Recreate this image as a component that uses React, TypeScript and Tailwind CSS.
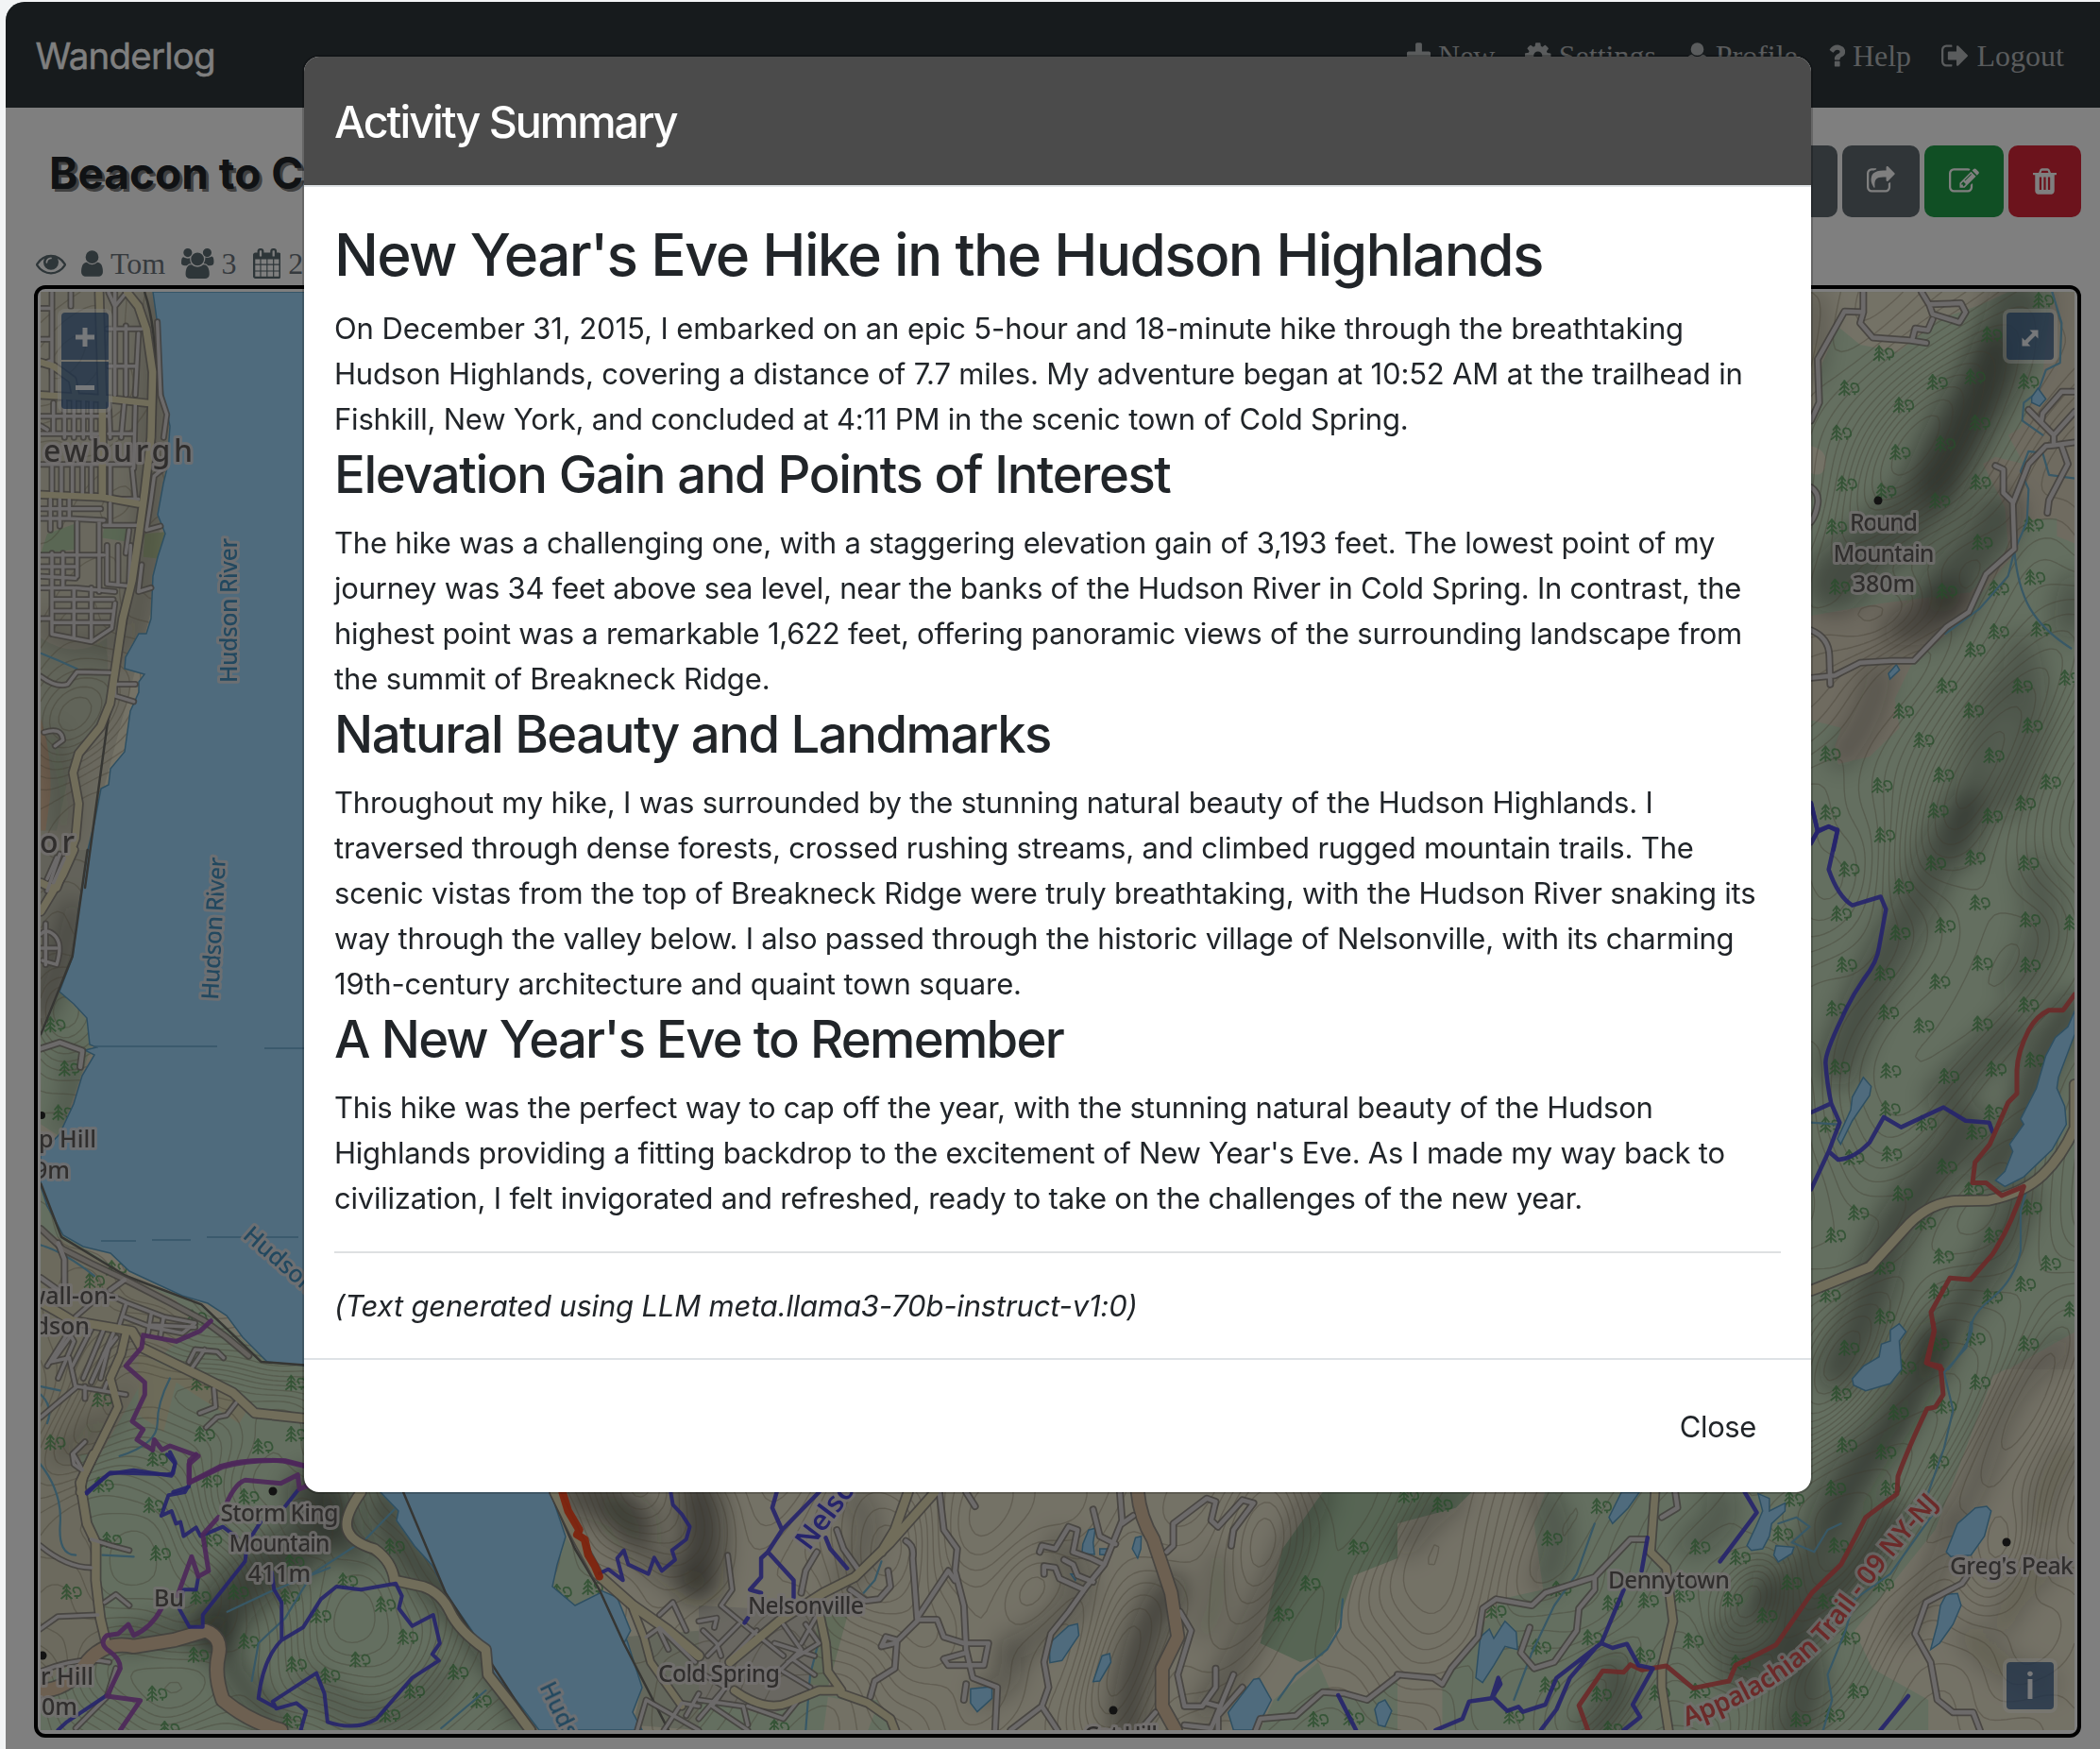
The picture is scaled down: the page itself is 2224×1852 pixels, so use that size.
import React from "react";

/* ---------- icons ---------- */

const ICONS = {
  plus: { box: "192 0 1408 1792", w: 25, d: "M1600 736v192q0 40-28 68t-68 28h-416v416q0 40-28 68t-68 28h-192q-40 0-68-28t-28-68v-416h-416q-40 0-68-28t-28-68v-192q0-40 28-68t68-28h416v-416q0-40 28-68t68-28h192q40 0 68 28t28 68v416h416q40 0 68 28t28 68z" },
  cog: { box: "128 0 1536 1792", w: 27.5, d: "M1152 896q0-106-75-181t-181-75-181 75-75 181 75 181 181 75 181-75 75-181zm512-109v222q0 12-8 23t-20 13l-185 28q-19 54-39 91 35 50 107 138 10 12 10 25t-9 23q-27 37-99 108t-94 71q-12 0-26-9l-138-108q-44 23-91 38-16 136-29 186-7 28-36 28h-222q-14 0-24.5-8.5t-11.5-21.5l-28-184q-49-16-90-37l-141 107q-10 9-25 9-14 0-25-11-126-114-165-168-7-10-7-23 0-12 8-23 15-21 51-66.5t54-70.5q-27-50-41-99l-183-27q-13-2-21-12.5t-8-23.5v-222q0-12 8-23t19-13l186-28q14-46 39-92-40-57-107-138-10-12-10-24 0-10 9-23 26-36 98.5-107.5t94.5-71.5q13 0 26 10l138 107q44-23 91-38 16-136 29-186 7-28 36-28h222q14 0 24.5 8.5t11.5 21.5l28 184q49 16 90 37l142-107q9-9 24-9 13 0 25 10 129 119 165 170 7 8 7 22 0 12-8 23-15 21-51 66.5t-54 70.5q26 50 41 98l183 28q13 2 21 12.5t8 23.5z" },
  user: { box: "256 0 1280 1792", w: 23, d: "M1536 1399q0 109-62.5 187t-150.5 78h-854q-88 0-150.5-78t-62.5-187q0-85 8.5-160.5t31.5-152 58.5-131 94-89 134.5-34.5q131 128 313 128t313-128q76 0 134.5 34.5t94 89 58.5 131 31.5 152 8.5 160.5zm-256-887q0 159-112.5 271.5t-271.5 112.5-271.5-112.5-112.5-271.5 112.5-271.5 271.5-112.5 271.5 112.5 112.5 271.5z" },
  question: { box: "384 0 1024 1792", w: 18.3, d: "M1088 1256v240q0 16-12 28t-28 12h-240q-16 0-28-12t-12-28v-240q0-16 12-28t28-12h240q16 0 28 12t12 28zm316-600q0 54-15.5 101t-35 76.5-55 59.5-57.5 43.5-61 35.5q-41 23-68.5 65t-27.5 67q0 17-12 32.5t-28 15.5h-240q-15 0-25.5-18.5t-10.5-37.5v-45q0-83 65-156.5t143-108.5q59-27 84-56t25-76q0-42-46.5-74t-107.5-32q-65 0-108 29-35 25-107 115-13 16-31 16-12 0-25-8l-164-125q-13-10-15.5-25t5.5-28q160-266 464-266 80 0 161 31t146 83 106 127.5 41 158.5z" },
  signout: { box: "64 0 1664 1792", w: 29.7, d: "M704 1440q0 4 1 20t.5 26.5-3 23.5-10 19.5-20.5 6.5h-320q-119 0-203.5-84.5t-84.5-203.5v-704q0-119 84.5-203.5t203.5-84.5h320q13 0 22.5 9.5t9.5 22.5q0 4 1 20t.5 26.5-3 23.5-10 19.5-20.5 6.5h-320q-66 0-113 47t-47 113v704q0 66 47 113t113 47h312l11.5 1 11.5 3 8 5.5 7 9 2 13.5zm928-544q0 26-19 45l-544 544q-19 19-45 19t-45-19-19-45v-288h-448q-26 0-45-19t-19-45v-384q0-26 19-45t45-19h448v-288q0-26 19-45t45-19 45 19l544 544q19 19 19 45z" },
  eye: { box: "0 0 1792 1792", w: 32, d: "M1664 960q-152-236-381-353 61 104 61 225 0 185-131.5 316.5t-316.5 131.5-316.5-131.5-131.5-316.5q0-121 61-225-229 117-381 353 133 205 333.5 326.5t434.5 121.5 434.5-121.5 333.5-326.5zm-720-384q0-20-14-34t-34-14q-125 0-214.5 89.5t-89.5 214.5q0 20 14 34t34 14 34-14 14-34q0-86 61-147t147-61q20 0 34-14t14-34zm848 384q0 34-20 69-140 230-376.5 368.5t-499.5 138.5-499.5-139-376.5-368q-20-35-20-69t20-69q140-229 376.5-368t499.5-139 499.5 139 376.5 368q20 35 20 69z" },
  users: { box: "64 0 1920 1792", w: 34.3, d: "M657 896q-162 5-265 128h-134q-82 0-138-40.5t-56-118.5q0-353 124-353 6 0 43.5 21t97.5 42.5 119 21.5q67 0 133-23-5 37-5 66 0 159 93 293zm1071 637q0 120-73 189.5t-194 69.5h-874q-121 0-194-69.5t-73-189.5q0-53 3.5-103.5t14-109 26.5-108.5 43-97.5 62-81 85.5-53.5 111.5-20q10 0 43 21.5t73 48 107 48 135 21.5 135-21.5 107-48 73-48 43-21.5q61 0 111.5 20t85.5 53.5 62 81 43 97.5 26.5 108.5 14 109 3.5 103.5zm-1024-1277q0 106-75 181t-181 75-181-75-75-181 75-181 181-75 181 75 75 181zm704 384q0 159-112.5 271.5t-271.5 112.5-271.5-112.5-112.5-271.5 112.5-271.5 271.5-112.5 271.5 112.5 112.5 271.5zm576 225q0 78-56 118.5t-138 40.5h-134q-103-123-265-128 93-134 93-293 0-29-5-66 66 23 133 23 59 0 119-21.5t97.5-42.5 43.5-21q124 0 124 353zm-128-609q0 106-75 181t-181 75-181-75-75-181 75-181 181-75 181 75 75 181z" },
  calendar: { box: "64 0 1664 1792", w: 29.7, d: "M192 1664h288v-288h-288v288zm352 0h320v-288h-320v288zm-352-352h288v-320h-288v320zm352 0h320v-320h-320v320zm-352-384h288v-288h-288v288zm736 736h320v-288h-320v288zm-384-736h320v-288h-320v288zm768 736h288v-288h-288v288zm-384-352h320v-320h-320v320zm-352-864v-288q0-13-9.5-22.5t-22.5-9.5h-64q-13 0-22.5 9.5t-9.5 22.5v288q0 13 9.5 22.5t22.5 9.5h64q13 0 22.5-9.5t9.5-22.5zm736 864h288v-320h-288v320zm-384-384h320v-288h-320v288zm384 0h288v-288h-288v288zm32-480v-288q0-13-9.5-22.5t-22.5-9.5h-64q-13 0-22.5 9.5t-9.5 22.5v288q0 13 9.5 22.5t22.5 9.5h64q13 0 22.5-9.5t9.5-22.5zm384-64v1280q0 52-38 90t-90 38h-1408q-52 0-90-38t-38-90v-1280q0-52 38-90t90-38h128v-96q0-66 47-113t113-47h64q66 0 113 47t47 113v96h384v-96q0-66 47-113t113-47h64q66 0 113 47t47 113v96h128q52 0 90 38t38 90z" },
  share: { box: "64 0 1664 1792", w: 29.7, d: "M1472 989v259q0 119-84.5 203.5t-203.5 84.5h-832q-119 0-203.5-84.5t-84.5-203.5v-832q0-119 84.5-203.5t203.5-84.5h255q13 0 22.5 9.5t9.5 22.5q0 27-26 32-77 26-133 60-10 4-16 4h-112q-66 0-113 47t-47 113v832q0 66 47 113t113 47h832q66 0 113-47t47-113v-214q0-19 18-29 28-13 54-37 16-16 35-8 21 9 21 29zm237-496l-384 384q-18 19-45 19-12 0-25-5-39-17-39-59v-192h-160q-323 0-438 131-119 137-74 473 3 23-20 34-8 2-12 2-16 0-26-13-10-14-21-31t-39.5-68.5-49.5-99.5-38.5-114-17.5-122q0-49 3.5-91t14-90 28-88 47-81.5 68.5-74 94.5-61.5 124.5-48.5 159.5-30.5 196.5-11h160v-192q0-42 39-59 13-5 25-5 26 0 45 19l384 384q19 19 19 45t-19 45z" },
  edit: { box: "0 0 1792 1792", w: 32, d: "M888 1184l116-116-152-152-116 116v56h96v96h56zm440-720q-16-16-33 1l-350 350q-17 17-1 33t33-1l350-350q17-17 1-33zm80 594v190q0 119-84.5 203.5t-203.5 84.5h-832q-119 0-203.5-84.5t-84.5-203.5v-832q0-119 84.5-203.5t203.5-84.5h832q63 0 117 25 15 7 18 23 3 17-9 29l-49 49q-14 14-32 8-23-6-45-6h-832q-66 0-113 47t-47 113v832q0 66 47 113t113 47h832q66 0 113-47t47-113v-126q0-13 9-22l64-64q15-15 35-7t20 29zm-96-738l288 288-672 672h-288v-288zm444 132l-92 92-288-288 92-92q28-28 68-28t68 28l152 152q28 28 28 68t-28 68z" },
  trash: { box: "192 0 1408 1792", w: 25, d: "M704 1376v-704q0-14-9-23t-23-9h-64q-14 0-23 9t-9 23v704q0 14 9 23t23 9h64q14 0 23-9t9-23zm256 0v-704q0-14-9-23t-23-9h-64q-14 0-23 9t-9 23v704q0 14 9 23t23 9h64q14 0 23-9t9-23zm256 0v-704q0-14-9-23t-23-9h-64q-14 0-23 9t-9 23v704q0 14 9 23t23 9h64q14 0 23-9t9-23zm-544-992h448l-48-117q-7-9-17-11h-317q-10 2-17 11zm928 32v64q0 14-9 23t-23 9h-96v948q0 83-47 143.5t-113 60.5h-832q-66 0-113-58.5t-47-141.5v-952h-96q-14 0-23-9t-9-23v-64q0-14 9-23t23-9h309l70-167q15-37 54-63t79-26h320q40 0 79 26t54 63l70 167h309q14 0 23 9t9 23z" },
};

function Icon({ name, className = "" }: { name: keyof typeof ICONS; className?: string }) {
  const i = ICONS[name];
  return (
    <svg width={i.w} height={32} viewBox={i.box} className={`block shrink-0 fill-current ${className}`} aria-hidden>
      <path d={i.d} />
    </svg>
  );
}

/* ---------- map data ---------- */

// Each map sheet has its own drawing units; the transform puts it on the map.
const SHEETS = {
  A: { x: 0, y: 300, sx: 0.33333, sy: 0.40816 },
  B: { x: 0, y: 900, sx: 0.33333, sy: 0.43367 },
  C: { x: 0, y: 1540, sx: 0.47194, sy: 0.33333 },
  D: { x: 740, y: 1540, sx: 0.47194, sy: 0.33333 },
  E: { x: 1480, y: 1400, sx: 0.47449, sy: 0.33333 },
  F: { x: 1910, y: 300, sx: 0.33333, sy: 0.38265 },
  G: { x: 1910, y: 850, sx: 0.33333, sy: 0.38265 },
};
type SheetKey = keyof typeof SHEETS;
type Shape = [SheetKey, string, number, string];

const tf = (k: SheetKey) => {
  const s = SHEETS[k];
  return `translate(${s.x} ${s.y}) scale(${s.sx} ${s.sy})`;
};

const TAN = "#e9e4cd";
const GREEN = "#c9dfc1";
const DARKGREEN = "#aecba8";
const WATER = "#9fd6fa";

const LAND: [SheetKey, string, string][] = [
  ["A", "M130 20H500L540 400L480 850L330 1310L265 1568H130Z", "#d4d1bd"],
  ["A", "M150 650L235 625L245 690L130 700Z", "#b4cfa8"],
  ["A", "M330 635H410L400 670L325 660Z", "#b4cfa8"],
  ["A", "M460 650L525 645L510 715L455 710Z", "#c0d0a0"],
  ["A", "M130 920Q240 980 340 920L345 1090L220 1270L180 1420H130Z", "#c2c8b2"],
  ["A", "M130 1130Q165 1220 160 1330L145 1420H130Z", "#dfbf9f"],
  ["B", "M130 0H278L230 260L130 440Z", "#c6c5b4"],
  ["B", "M130 440L190 345L285 420L290 480L190 700L130 670Z", GREEN],
  ["B", "M130 810L200 940L410 1040L640 1110L850 1250L968 1258V1568H130Z", GREEN],
  ["B", "M130 925L560 1100L620 1160L480 1260L250 1568H130Z", "#d8d4bb"],
  ["B", "M440 1230L800 1350L760 1400L560 1300L520 1420L440 1380Z", "#dad6b3"],
  ["C", "M90 0H870L900 180L1000 440L1200 876H90Z", GREEN],
  ["C", "M90 0H180L205 300L225 600L90 740Z", "#d8d5bd"],
  ["C", "M1270 260L1345 440L1290 480L1240 420Z", GREEN],
  ["C", "M1420 860L1440 740L1400 580L1568 560V876Z", "#c9cfb8"],
  ["D", "M0 480L270 500V740L160 830L0 780Z", "#d2cfc2"],
  ["D", "M0 780L160 830L240 760L400 780L430 876H0Z", GREEN],
  ["D", "M290 770L400 800L380 876H280Z", "#e6e2ca"],
  ["D", "M270 480L340 480L290 740L250 730Z", "#c2d6b3"],
  ["D", "M1400 120H1568V330L1470 385L1430 560L1400 640L1350 660L1260 600L1310 300Z", DARKGREEN],
  ["D", "M1390 660L1420 760L1520 770L1568 700V876H1260L1290 780Z", GREEN],
  ["E", "M165 540L130 590L0 640V540Z", DARKGREEN],
  ["E", "M0 880V1060L100 1130V1300H0Z", TAN],
  ["E", "M330 540L305 640L325 850L230 880L190 960L100 1150V1300H1185V1200L1060 1100L1020 980L1200 660L1330 170L1520 30V0H900V540H540L430 730L480 755L560 690L590 660L665 560V540Z", GREEN],
  ["F", "M24 24H862V1568H24Z", GREEN],
  ["G", "M24 0H862V1568H24Z", GREEN],
  ["F", "M24 24H650L560 60L430 100L300 190L180 170L110 120L60 220L24 400Z", TAN],
  ["F", "M24 450Q75 460 70 500T24 525Z", TAN],
  ["F", "M24 920L250 885L530 855L600 790L650 730L640 620L570 500L610 480L700 500L650 420L690 400L760 250L790 24H862V720L805 700V650L700 655L680 740L600 820L480 950L340 1060L290 1150L305 1230L210 1310L110 1330L100 1280L120 1230L30 1210H24Z", "#ded6c1"],
  ["G", "M650 1568L862 1465V1568Z", "#dfd8c4"],
];

const SHADE: Shape[] = [
  ["F", "M680 60C640 250 520 320 440 500S200 720 100 830", 64, ".36"],
  ["F", "M600 180C600 300 500 420 420 560", 44, ".3"],
  ["F", "M620 640C560 760 470 800 440 850", 50, ".36"],
  ["F", "M300 960Q420 860 500 870Q420 980 300 960", 30, ".4"],
  ["F", "M240 1080Q220 1200 120 1310", 26, ".28"],
  ["F", "M690 1020Q760 1250 640 1430", 38, ".26"],
  ["F", "M620 1120Q560 1270 500 1568", 36, ".26"],
  ["F", "M862 850Q840 900 850 940", 34, ".3"],
  ["F", "M30 40Q60 120 24 260", 18, ".26"],
  ["G", "M520 20C430 100 400 220 330 320S180 560 110 730", 42, ".34"],
  ["G", "M660 620C560 700 500 760 440 820", 34, ".34"],
  ["G", "M740 200Q800 330 690 500", 40, ".24"],
  ["G", "M520 890C440 1000 360 1080 300 1160S230 1400 110 1568", 42, ".4"],
  ["G", "M850 570Q740 690 700 880Q650 960 590 1020", 34, ".4"],
  ["G", "M690 1090Q650 1200 540 1340T400 1568", 34, ".38"],
  ["E", "M1190 60Q1130 300 1060 400T960 640T840 900", 40, ".38"],
  ["E", "M1150 240Q1080 420 980 640", 22, ".26"],
  ["E", "M1100 620Q1040 760 980 860T840 1040T760 1110", 36, ".44"],
  ["E", "M900 1080Q920 1180 880 1300", 44, ".38"],
  ["E", "M820 800Q820 920 720 1020", 24, ".34"],
  ["E", "M480 1110Q520 1180 440 1300", 36, ".36"],
  ["E", "M330 560Q380 680 330 820", 26, ".3"],
  ["E", "M720 560Q740 640 660 700", 30, ".26"],
  ["E", "M1240 640Q1200 800 1130 980", 20, ".28"],
  ["E", "M1480 80Q1360 200 1330 360T1240 640", 24, ".26"],
  ["E", "M1500 420Q1440 500 1440 620M1450 780Q1380 860 1350 960", 22, ".22"],
  ["E", "M1280 1000Q1330 1100 1450 1150", 24, ".22"],
  ["E", "M120 560Q60 620 20 700", 30, ".26"],
  ["C", "M700 130Q760 230 640 330T480 560", 54, ".46"],
  ["C", "M860 140Q860 250 980 420T1180 820", 30, ".44"],
  ["C", "M750 130Q760 260 800 310", 30, ".4"],
  ["C", "M490 540Q500 700 620 850", 22, ".4"],
  ["C", "M700 720Q750 820 840 840T1000 700", 24, ".24"],
  ["C", "M280 590Q360 560 440 540", 26, ".3"],
  ["C", "M1300 130Q1400 160 1430 220", 44, ".4"],
  ["C", "M1380 160Q1420 320 1568 420", 30, ".26"],
  ["D", "M0 130Q20 250 0 400", 44, ".5"],
  ["D", "M340 130Q420 230 330 400", 24, ".26"],
  ["D", "M1060 430Q980 560 960 876", 34, ".46"],
  ["D", "M810 290Q860 360 850 450Q800 560 700 620", 26, ".28"],
  ["D", "M1390 130Q1330 300 1240 560T1140 800", 28, ".3"],
  ["D", "M700 640Q720 720 640 760", 22, ".3"],
  ["D", "M1160 340Q1180 460 1130 560", 20, ".2"],
  ["B", "M130 400Q190 300 230 150", 20, ".4"],
  ["B", "M230 500Q240 600 190 680", 14, ".34"],
  ["B", "M300 1400Q260 1450 180 1480", 16, ".3"],
  ["B", "M400 1310Q380 1380 340 1420", 12, ".2"],
  ["A", "M500 40Q490 240 470 600T360 960", 18, ".26"],
  ["A", "M140 880Q250 980 350 900", 14, ".3"],
  ["A", "M150 1180Q220 1300 200 1420", 18, ".24"],
];

const WHITE = "#d9d4d4";
const YELLOW = "#e2dbb4";
const ORANGE = "#dac0a2";

const ROADS: Shape[] = [
  // Newburgh street grid
  ["A", "M130 65H165M130 145H165M165 24V290M225 24V60M365 24V290M400 110V290M440 130L430 290M130 210L165 200M345 215H430M340 118H450M345 24L365 60L395 30", 4, WHITE],
  ["A", "M130 390H320M130 345H345M170 310V390M205 300V400M235 300V400M265 300V400M290 300V400M345 300L350 400M395 310L385 400M430 310L425 480M345 390H420", 4, WHITE],
  ["A", "M130 470H420M165 470V545M195 470V545M230 470V545M262 470V545M290 470V545M350 470V555M365 560H440M420 480L430 560", 4, WHITE],
  ["A", "M130 585H320M130 610H220M220 560V610L330 615M350 570V625M330 628H440M160 560V640M190 560V630M245 620V760M315 620V800M410 640L400 700", 4, WHITE],
  ["A", "M130 705H330M130 735H240M130 760L240 765M130 790L235 790M165 700V910M200 700V790M240 790L365 800M235 790V920M170 820H360M170 850H360M165 880H355M165 910L290 930L355 895L365 830M290 790V930M340 680V780L410 785L415 680M375 680V780M130 870H165", 4, WHITE],
  ["A", "M130 1020Q180 1050 215 1040L245 1008L350 1010M365 1030V1070L425 1085M365 1040L430 1040", 4, WHITE],
  ["A", "M500 100L510 290L530 340L520 400M520 480L490 500L480 560L465 640L510 630M450 730L440 800L480 790", 4, WHITE],
  ["A", "M130 370L150 380M140 1165Q195 1150 200 1185L175 1200M150 1545L180 1490M170 1560L205 1495", 4, WHITE],
  ["A", "M315 24L325 290V545", 8, YELLOW],
  ["A", "M130 290L350 300L480 312M130 548L325 555L440 572M130 205L170 215L230 250L240 290", 7, YELLOW],
  ["A", "M405 24L440 60L465 120L485 230L480 400L460 540L440 660L420 770L390 870L370 980L350 1090L320 1150L250 1220L232 1270L250 1350L240 1440L180 1568", 8, YELLOW],
  ["B", "M235 0L200 60L130 150M130 80L170 95", 8, YELLOW],
  ["B", "M130 205Q150 190 175 210T180 280L135 270M130 240H180M145 180V280M150 100L190 10M170 80L205 20", 4, WHITE],
  ["B", "M130 485L190 470L262 490L255 530", 5, WHITE],
  ["B", "M130 925L200 975L290 1010L400 1050L540 1105L650 1150L720 1190L790 1235", 5, "#c9c2ba"],
  ["B", "M185 960L205 1000L205 1060M130 1045L185 1075M350 1075L395 1050", 5, WHITE],
  ["B", "M240 1140L330 1080L400 1105L520 1140L620 1155L580 1180L480 1165M375 1170L400 1110M395 1140L480 1165M480 1135L470 1180M520 1140L510 1185M480 1160L620 1165", 4, WHITE],
  ["B", "M150 1260L215 1180M170 1245L240 1170M185 1290L235 1200L220 1180M230 1260L290 1170M265 1290L330 1170M290 1300L360 1180M320 1290L350 1200M330 1230L370 1190", 4, WHITE],
  ["B", "M130 1385L245 1310L400 1330M240 1310L220 1240L160 1250M270 1340V1310M340 1300L330 1320", 4, WHITE],
  ["B", "M270 1445L230 1475L235 1500L270 1520", 4, WHITE],
  ["B", "M600 1250L620 1220L690 1225L710 1240M610 1265L650 1220M680 1315L685 1360L635 1375M750 1350L720 1380L690 1385L655 1410", 4, WHITE],
  ["B", "M130 1105Q190 1130 230 1150L420 1175L450 1215L650 1290L740 1325L810 1375L968 1388", 9, YELLOW],
  ["B", "M400 1180L385 1230L350 1290L375 1360L330 1430L265 1530L255 1568", 8, YELLOW],
  ["C", "M210 0L180 90L195 220L215 280V400L225 520L240 610", 9, YELLOW],
  ["C", "M90 290Q150 360 205 360M205 270L250 290L290 305M235 470L260 445L290 480M90 555L130 515L220 510M90 690Q180 640 245 660M170 870L240 770L260 680M165 0L185 50", 4, WHITE],
  ["C", "M810 120Q770 200 780 240T840 300Q880 340 885 400L950 420Q990 440 1010 500T1090 620L1095 700L1150 800L1190 876", 10, YELLOW],
  ["C", "M90 750Q150 750 190 670T300 610L390 590Q440 570 460 560Q500 580 490 640T500 780Q560 850 630 876", 14, ORANGE],
  ["C", "M1245 120L1290 250L1340 380L1420 480L1500 560L1568 640", 10, YELLOW],
  ["C", "M1420 490L1445 580L1460 660L1530 800", 7, YELLOW],
  ["C", "M1480 510L1510 470L1540 560M1450 580L1480 550L1560 660M1500 620L1480 560M1430 876L1450 780L1568 876M1490 876L1530 790L1568 800M1568 760L1540 830", 4, WHITE],
  ["D", "M65 320L75 430L50 480L110 550L190 640M10 560L40 600L50 640M0 530L40 520L35 550M90 540L20 640M130 560L70 650M170 600L260 640M190 540L230 620L180 690M240 540L270 600L200 660M210 650L260 700M190 690L250 740M270 500L230 600", 4, WHITE],
  ["D", "M0 690L60 740L30 800L110 876M0 780L100 800L110 860M60 740L0 840M110 800L190 840L230 770", 4, WHITE],
  ["D", "M310 240L325 300L360 370M265 310L240 370L230 440M340 430L375 465L405 460L430 420L425 370M540 120L550 240L580 300L575 370L595 480L600 620L615 710L670 740L665 876M465 275Q485 290 480 330L490 520L560 370L575 400M490 525H535L550 580L595 600L650 600L640 670L560 670L550 650L600 630M490 530L440 600L410 610L420 580L445 590L440 680L395 720L385 770M600 730L595 780M600 120L620 165", 5, WHITE],
  ["D", "M945 120L950 210L930 280L910 350L870 420L830 500L790 570L775 660L785 740L770 800L700 876M770 800L805 876M975 195L950 220M885 175L900 260L935 285M910 350L880 330L840 310L850 240L830 230L800 300L770 290L765 310M885 405L850 385L840 350L820 335M865 430L810 395L800 360L775 355L775 380", 5, WHITE],
  ["D", "M1050 310L1065 290V220L1140 140L1160 150L1150 210L1165 230L1220 145L1245 155L1200 240L1195 290M1080 500L1105 560L1075 700L1090 800L1130 800L1160 740V680M1090 860L1150 870L1200 700M1140 790L1165 800M1220 740L1165 830V876M1025 820L1000 860M1250 876L1260 840L1340 830L1400 755L1450 760L1500 780L1568 705", 5, WHITE],
  ["D", "M80 750Q150 820 200 790L270 750L320 750L290 690L285 600L270 500M320 760L380 790L430 840L440 876", 8, YELLOW],
  ["D", "M530 120L430 280L350 390L280 440L180 530L70 660M470 120L440 240L410 310", 9, YELLOW],
  ["D", "M985 120Q990 200 1020 270L1060 440L1075 580L1040 680V800L1070 876", 13, ORANGE],
  ["E", "M0 1120L80 1130L100 1150L120 1100L180 1000L190 910L220 880L300 900L330 860L440 810L520 690L560 690M440 810V850L405 910L400 980L350 1080L305 1100L275 1050L295 970M620 540L625 590L590 620", 5, WHITE],
  ["E", "M1270 810L1260 830L1180 890L1155 990L1190 1080L1205 1200L1240 1240L1285 1240L1300 1296", 5, WHITE],
  ["E", "M575 540L565 730L600 780L615 950L590 1100V1160L605 1296", 8, YELLOW],
  ["F", "M190 24V80L130 78L45 210L50 330L24 380M190 80L180 110L220 150L340 158L390 165M345 158L355 125L395 130L410 100M375 24L400 60L410 85L495 108L515 80L500 55L400 58", 5, WHITE],
  ["F", "M862 300H820L760 360L755 385L715 350M755 385L795 420L862 355M795 420V448L770 450L715 500L665 610L670 735L580 805L525 910L455 950L350 1045L280 1045L180 1050L100 1085L24 1092M795 448L862 440M820 450L840 500L780 600L775 635M610 505L635 515V580L665 605M24 960Q80 980 82 1030L85 1110M24 565Q50 580 45 610T24 660", 5, WHITE],
  ["G", "M24 1350L210 1285L320 1180Q390 1110 480 1102L590 1100Q700 1080 760 1030T862 900V780", 10, YELLOW],
];

const RAIL: [SheetKey, string][] = [
  ["A", "M460 24Q500 120 495 300T450 640L400 880L340 1150L270 1568"],
  ["B", "M278 0L230 260L130 450M130 815L195 945L400 1040L640 1110L830 1250L968 1258"],
  ["C", "M905 120L1000 440L1110 680L1200 876M1235 120L1290 300L1345 430L1400 600L1500 876"],
];

const STREAMS: [SheetKey, string][] = [
  ["C", "M90 30Q140 120 135 220T170 320M885 175L820 270L700 380L640 520L580 600L565 720M740 360L600 440L510 500M1090 750L990 870M230 320L300 325"],
  ["D", "M410 340L395 400L370 440M270 590L250 700L240 876M1445 460L1440 550L1410 620L1340 700L1300 780"],
  ["E", "M440 640L400 800L350 900L300 1050L260 1200M1280 0L1270 80L1220 160L1240 280L1220 400L1180 560M1200 600L1100 800L1020 880L1000 980L960 1120L970 1200L950 1296M850 640L890 620L920 650L880 700L930 730L960 660L990 640"],
  ["F", "M790 24L820 110L815 220L770 240L745 300L700 330L695 380L760 420M760 470L715 465L690 520L715 570L710 660L670 740L650 810L560 900L450 970M670 740Q680 840 720 900T850 1010M760 470L780 530L862 540"],
  ["G", "M710 1070L690 1130V1240Q670 1320 600 1370T535 1450T460 1568M24 885L110 890"],
  ["B", "M130 965Q200 980 300 1040M130 1310L190 1320M540 1290Q500 1350 500 1400T380 1480M130 1330Q170 1360 150 1400"],
  ["A", "M130 960L190 980L245 1000"],
];

const LAKES: [SheetKey, string][] = [
  ["F", "M725 315L745 290L770 320L750 340L725 330ZM270 1080L295 1055L305 1070L275 1095Z"],
  ["G", "M190 760L215 785L210 810L155 880L118 945L108 930L150 850L155 815Z"],
  ["G", "M862 575L840 620L800 650L770 700L740 790L690 875L700 890L655 945L665 965L640 1020L610 1045L640 1062L700 1035L790 960L835 890L830 840L805 790L810 760L862 640Z"],
  ["E", "M1120 5L1135 30L1120 60L1125 150L1100 195L1045 218L1018 200L1015 180L1040 140L1075 110L1080 70L1100 60L1100 25Z"],
  ["E", "M500 540H540L515 590L480 640L472 620ZM805 545L830 560V600L865 575L865 600L835 640L830 680L815 720L790 725L780 710L800 650L815 600ZM845 710L885 715L880 735L850 762L840 740Z"],
  ["E", "M1290 590L1315 585L1325 600L1310 680L1280 740L1235 745L1225 730L1250 640ZM1225 865L1250 862L1258 900L1240 960L1210 1020L1190 1040L1205 960L1212 900Z"],
  ["E", "M240 950L265 985L268 1040L240 1030L215 1090L190 1145L175 1130L180 1060L185 1000L205 975L215 1005Z"],
  ["D", "M875 240L890 235L885 280L888 318L860 315L862 285ZM900 300L918 300L918 320L900 318ZM980 265L993 260L992 300L985 330L973 300ZM835 380H850L845 400Z"],
  ["D", "M830 545L850 538L853 575L815 655L788 662L787 600ZM905 640L922 633L925 660L900 720L885 722ZM610 745L658 738V775L625 818L610 790ZM1245 715L1258 712L1285 780L1250 876H1200L1188 820ZM1525 790L1540 780L1555 815L1540 865L1525 860L1517 810Z"],
  ["C", "M1345 430L1385 455L1415 560L1400 600Z"],
];

const BLUE = "#4d4ad8";
const PURPLE = "#9a4fb4";
const RED = "#d85452";

const TRAILS: Shape[] = [
  ["F", "M24 1440L45 1515L24 1550M45 1515L80 1503L108 1515L95 1568", 4.5, BLUE],
  ["G", "M24 0L45 80L24 110M45 80L80 66L108 75L80 185Q110 260 155 284L245 260L262 295L240 400Q235 440 190 490Q150 540 120 600Q70 690 70 720Q75 780 88 832L24 857M88 832L115 885L80 965L24 1070M80 965L110 988Q160 985 210 940L255 870L310 898L445 843L515 880L590 885L600 910", 4.5, BLUE],
  ["G", "M862 530L825 574H780Q740 590 715 630Q680 690 678 740V805L650 830Q620 890 592 945L545 995L537 1052H580L630 1087L700 1062Q660 1170 600 1250L530 1320L465 1315L405 1410L415 1460L390 1550L440 1568", 5, RED],
  ["E", "M1195 0L1198 30L1183 130L1212 140L1218 230L1200 270L1182 275Q1140 400 1117 490L1115 545L1045 620L990 770L925 860L845 1025L755 1090L740 1140L660 1163L600 1092L545 1105L520 1088L505 1112L458 1108L405 1218L425 1296", 5, RED],
  ["E", "M775 540L802 605L720 760M558 685L545 790M505 850L455 1020L355 1130L330 1215L280 1238L270 1222L245 1235L212 1190L230 1150L225 1130L210 1195L160 1205L145 1260L85 1296M455 1020L480 1035L512 1022L538 1090L570 1100L525 1215L542 1255L505 1296M445 1030L385 1130L355 1230L320 1296M1140 1188L1078 1296", 4.5, BLUE],
  ["D", "M175 120L165 170L187 240L155 310L213 400V455M270 120L187 240M155 310L140 330V390L115 430L140 440M285 265L295 300L333 362M110 520L103 535M1435 765L1475 876", 4.5, BLUE],
  ["C", "M1505 120L1510 160L1530 190L1548 230L1540 270L1508 305L1515 335L1485 370L1468 328L1455 380L1410 350L1400 305L1385 330L1398 400L1365 365L1345 378", 4, BLUE],
  ["C", "M195 125Q220 90 245 62L300 50L385 68L393 30L375 0M425 95L415 120L378 130L362 195L385 180L395 220L405 215L412 260L440 232L450 260L500 230L530 262M668 115L640 165M585 215L555 280L550 340L455 510V548H425L402 490L412 430H440L445 390M610 375L615 430L632 470V590M632 590L680 550L720 460L755 420L810 430L888 410L902 450L895 490L925 545L972 510L987 600L970 635L985 655L925 710L845 840Q800 880 735 850L728 760L710 695L612 785L620 808L665 790L687 815L675 876M632 590Q590 650 580 775L620 805M240 765L150 850L130 876", 4, BLUE],
  ["B", "M275 1568L350 1520L530 1525L550 1523L557 1495L540 1470M600 1555L550 1568", 4, BLUE],
  ["B", "M670 1150L635 1175L560 1200L455 1185L450 1215L400 1260L460 1300V1330L420 1395L455 1415L435 1440L485 1465L490 1440L515 1465L540 1455L630 1480L600 1500V1545L700 1505Q780 1485 900 1492L968 1505", 5, PURPLE],
  ["C", "M440 0L425 20V90L500 40Q560 15 640 20L682 35M510 150Q530 90 550 82L630 92L668 65L672 110L690 100M490 200L455 255L468 370L445 388L430 325L398 450M362 490Q340 550 300 575L288 540L265 570L240 575Q220 600 245 625T270 680L240 768L315 782L270 876", 5, PURPLE],
  ["C", "M1262 120L1275 180L1300 240L1295 255L1312 270L1320 320L1335 355L1345 388", 8.5, "#ff4418"],
];

const TREES: [SheetKey, number[]][] = [
  ["F", [762, 45, 598, 140, 255, 192, 145, 288, 425, 272, 545, 257, 715, 270, 318, 335, 120, 412, 307, 466, 450, 442, 560, 384, 137, 553, 262, 573, 433, 600, 562, 548, 105, 672, 568, 715, 730, 665, 115, 838, 735, 812, 620, 842, 620, 962, 755, 955, 545, 1012, 455, 1112, 695, 1112, 845, 1090, 318, 1182, 540, 1180, 382, 1262, 727, 1222, 605, 1305, 445, 1358, 250, 1388, 785, 1378, 85, 1300, 85, 1462, 428, 1457, 600, 1472, 705, 1437, 258, 1525, 455, 850]],
  ["G", [420, 165, 545, 150, 145, 182, 715, 165, 318, 230, 120, 305, 560, 275, 450, 338, 307, 358, 720, 322, 137, 446, 258, 470, 433, 493, 568, 442, 720, 447, 105, 568, 270, 578, 382, 615, 568, 610, 715, 557, 115, 730, 277, 740, 462, 755, 612, 735, 735, 710, 275, 845, 390, 885, 85, 890, 605, 855, 550, 910, 160, 980, 280, 970, 455, 1005, 315, 1080, 540, 1070, 725, 1118, 175, 1133, 102, 1195, 388, 1160, 605, 1195, 445, 1253, 785, 1273, 258, 1283, 705, 1330, 85, 1360, 430, 1350, 600, 1365, 258, 1420, 145, 1507, 545, 1480, 715, 1495, 430, 1495, 860, 330, 860, 1400]],
  ["E", [1300, 188, 1135, 140, 990, 225, 1118, 285, 1225, 265, 1003, 388, 1090, 410, 1208, 440, 978, 525, 1100, 525, 885, 560, 860, 670, 985, 707, 765, 745, 675, 712, 880, 825, 825, 930, 748, 878, 640, 865, 560, 882, 480, 890, 345, 685, 455, 583, 100, 578, 365, 845, 435, 1000, 320, 1030, 660, 1010, 552, 1055, 340, 1150, 675, 1170, 455, 1180, 260, 1250, 480, 1290, 975, 1245, 1028, 1170, 1010, 1000, 1085, 830, 960, 885, 900, 1260, 585, 1175, 765, 1080, 25, 548, 220, 915]],
  ["D", [1480, 293, 1372, 408, 1312, 505, 1390, 840, 1470, 835, 180, 865]],
  ["C", [558, 132, 345, 160, 475, 80, 232, 95, 250, 270, 360, 312, 475, 268, 885, 290, 660, 340, 780, 400, 160, 435, 650, 450, 535, 435, 450, 450, 865, 475, 720, 510, 915, 578, 558, 592, 445, 635, 808, 650, 665, 665, 740, 700, 1028, 690, 352, 758, 930, 750, 1080, 780, 655, 845, 875, 825, 380, 870, 1260, 435, 1330, 420]],
  ["B", [175, 425, 220, 532, 200, 640, 300, 1050, 940, 1300, 640, 1300, 325, 1340, 650, 1425, 175, 1445, 835, 1455, 940, 1425, 500, 1485, 370, 1020, 625, 1140]],
];

const RIVER =
  "M162 309L167 345 170 386 173 422 180 451 177 496 173 512 167 545 175 565 167 590 162 610 160 655 155 671 147 671 133 696 132 708 153 714 147 722 147 733 138 753 132 796 117 814 115 831 107 835 100 871 93 900 83 965 77 1013 63 1050 78 1063 92 1078 95 1106 102 1109 90 1112 100 1117 87 1139 78 1169 63 1201 43 1222V1256L50 1277 67 1308 88 1320 117 1327 137 1346 167 1360 193 1372 220 1380 240 1393 257 1416 283 1442 322 1446 403 1580 422 1600 420 1610 439 1637 458 1658 472 1687 500 1727 524 1773 552 1807 571 1832H680L670 1813 680 1787 665 1740 645 1690 635 1687 609 1700 585 1680 590 1657 599 1627 583 1580V1300H400V309Z";

/* ---------- terrain contours ---------- */

// [centre x, centre y, height, long radius, short radius, bearing in degrees]
const HILLS = [
  [2005, 500, 1.5, 190, 70, -60], [2010, 650, 0.7, 70, 40, -20], [2080, 860, 1.3, 220, 70, -66],
  [2120, 1020, 0.8, 130, 50, -60], [1990, 1180, 1, 170, 60, -62], [2110, 1280, 0.9, 150, 50, -55],
  [1960, 1420, 1.2, 170, 50, -62], [2150, 1500, 0.9, 140, 50, -68], [1990, 1700, 1.1, 200, 46, -55],
  [1855, 1690, 0.9, 60, 34, -60], [2120, 1640, 0.7, 60, 36, -70], [1690, 1800, 0.9, 90, 50, -55],
  [1530, 1640, 0.9, 130, 60, -60], [1340, 1620, 1.1, 90, 44, -75], [1090, 1680, 0.8, 60, 40, -60],
  [1180, 1790, 1, 130, 44, -80], [940, 1620, 0.8, 90, 60, 80], [690, 1590, 1.5, 110, 70, 50],
  [290, 1580, 1.7, 130, 100, 20], [390, 1740, 1.4, 130, 100, -40], [180, 1780, 0.8, 90, 60, 0],
  [90, 1520, 0.8, 90, 50, -40], [250, 1480, 0.7, 130, 40, 10], [70, 760, 0.7, 60, 40, -50], [60, 1070, 0.7, 40, 50, 0],
];

function elevation(x: number, y: number) {
  let h = 0.2 * Math.sin(x / 47 + Math.sin(y / 61)) + 0.18 * Math.sin(y / 53 + Math.cos(x / 71)) + 0.05 * Math.sin(x / 17 + y / 23) + (x - y) / 1900;
  for (const [cx, cy, a, r1, r2, deg] of HILLS) {
    const t = (deg * Math.PI) / 180;
    const dx = x - cx;
    const dy = y - cy;
    const u = (dx * Math.cos(t) + dy * Math.sin(t)) / r1;
    const v = (-dx * Math.sin(t) + dy * Math.cos(t)) / r2;
    h += a * Math.exp(-(u * u + v * v));
  }
  return h;
}

function contourPath(x0: number, y0: number, x1: number, y1: number) {
  const step = 6;
  const gap = 0.115;
  const out: string[] = [];
  for (let y = y0; y < y1; y += step) {
    for (let x = x0; x < x1; x += step) {
      const c = [elevation(x, y), elevation(x + step, y), elevation(x + step, y + step), elevation(x, y + step)];
      const lo = Math.min(...c);
      const hi = Math.max(...c);
      for (let l = Math.ceil(lo / gap) * gap; l <= hi; l += gap) {
        const pts: string[] = [];
        const px = [x, x + step, x + step, x];
        const py = [y, y, y + step, y + step];
        for (let i = 0; i < 4; i++) {
          const j = (i + 1) % 4;
          if (c[i] < l !== c[j] < l) {
            const t = (l - c[i]) / (c[j] - c[i]);
            pts.push(`${(px[i] + (px[j] - px[i]) * t).toFixed(1)} ${(py[i] + (py[j] - py[i]) * t).toFixed(1)}`);
          }
        }
        for (let i = 0; i + 1 < pts.length; i += 2) out.push(`M${pts[i]}L${pts[i + 1]}`);
      }
    }
  }
  return out.join("");
}

const CONTOURS = contourPath(43, 309, 325, 1584) + contourPath(1914, 309, 2197, 1584) + contourPath(43, 1578, 2197, 1832);

/* ---------- map ---------- */

function Line({ k, d, w, c, o = 1 }: { k: SheetKey; d: string; w: number; c: string; o?: number | string }) {
  return (
    <path transform={tf(k)} d={d} fill="none" stroke={c} strokeWidth={w} strokeOpacity={o} strokeLinecap="round" strokeLinejoin="round" vectorEffect="non-scaling-stroke" />
  );
}

function Label({ x, y, size = 25, fill = "#605c5a", anchor = "start", length, rotate = 0, spacing = 0, weight = 500, children }: {
  x: number; y: number; size?: number; fill?: string; anchor?: "start" | "middle" | "end"; length?: number; rotate?: number; spacing?: number; weight?: number; children: string;
}) {
  return (
    <text
      transform={`translate(${x} ${y}) rotate(${rotate})`}
      fontSize={size} fontWeight={weight} fill={fill} textAnchor={anchor} textLength={length} letterSpacing={spacing}
      stroke="#e6e0e0" strokeOpacity={0.8} strokeWidth={6} strokeLinejoin="round" paintOrder="stroke"
    >
      {children}
    </text>
  );
}

const RIVER_TEXT = "#4590bf";

function TrailMap() {
  return (
    <svg viewBox="43 309 2154 1523" className="block h-[1523px] w-[2154px] font-['Noto_Sans',sans-serif]">
      <defs>
        <filter id="soft" x="-20%" y="-20%" width="140%" height="140%"><feGaussianBlur stdDeviation="13" /></filter>
        <filter id="tile" x="0" y="0" width="100%" height="100%"><feGaussianBlur stdDeviation="0.7" /></filter>
        <g id="wood" fill="none" stroke="#4f9a55" strokeWidth="1.8">
          <path d="M-5 -8V9M-5 -7L-9 -2M-5 -7L-1 -2M-5 -2L-10 3M-5 -2L0 3M-5 3L-11 8M-5 3L1 8" />
          <path d="M3 5H8Q11 4 10 0T6 -4Q2 -5 2 -1L4 2M6 5V8" />
        </g>
        <path id="at" d="M1786 1828Q1900 1788 1952 1717T2054 1592L2064 1572" />
      </defs>
      <g filter="url(#tile)">
        <rect x="43" y="309" width="2154" height="1523" fill={TAN} />
        {LAND.map(([k, d, c], i) => <path key={i} transform={tf(k)} d={d} fill={c} />)}
        <g filter="url(#soft)">
          {SHADE.map(([k, d, w, o], i) => <Line key={i} k={k} d={d} w={w} c="#1a1c18" o={o} />)}
        </g>
        <path d={CONTOURS} fill="none" stroke="#7d725c" strokeOpacity=".34" strokeWidth="1.4" />
        {TREES.map(([k, p]) => {
          const s = SHEETS[k];
          const list = [];
          for (let i = 0; i < p.length; i += 2) list.push(<use key={i} href="#wood" opacity=".75" transform={`translate(${s.x + p[i] * s.sx} ${s.y + p[i + 1] * s.sy})`} />);
          return <g key={k}>{list}</g>;
        })}
        <path d={RIVER} fill={WATER} stroke="#5d9fc4" strokeWidth="1.5" />
        <path d="M100 1108H230M280 1110H322M107 1314H144M161 1313H202M219 1310H316" stroke="#6ba9cf" strokeWidth="1.5" fill="none" />
        {STREAMS.map(([k, d], i) => <Line key={i} k={k} d={d} w={2.2} c="#6fb0cc" />)}
        {LAKES.map(([k, d], i) => <path key={i} transform={tf(k)} d={d} fill={WATER} stroke="#5d9fc4" strokeWidth="1.5" vectorEffect="non-scaling-stroke" />)}
        {RAIL.map(([k, d], i) => <Line key={i} k={k} d={d} w={2.5} c="#6c6c66" />)}
        {ROADS.map(([k, d, w], i) => <Line key={i} k={k} d={d} w={w + 3} c="#85807a" o={0.85} />)}
        {ROADS.map(([k, d, w, c], i) => <Line key={i} k={k} d={d} w={w - 0.5} c={c} />)}
        {TRAILS.map(([k, d, w, c], i) => <Line key={i} k={k} d={d} w={w} c={c} o={0.92} />)}
        <g fill="#262626">
          <circle cx="1989" cy="530" r="4.500" />
          <circle cx="44" cy="1181" r="4" />
          <circle cx="289" cy="1579" r="4.500" />
          <circle cx="45" cy="1753" r="4.500" />
          <circle cx="1179" cy="1811" r="4.500" />
          <circle cx="2125" cy="1633" r="4.500" />
        </g>
        <Label x={46} y={489} size={32} length={158}>ewburgh</Label>
        <Label x={42} y={903} size={32} spacing={4}>or</Label>
        <Label x={251} y={723} rotate={-90} length={153} fill={RIVER_TEXT}>Hudson River</Label>
        <Label x={231} y={1059} rotate={-87} length={151} fill={RIVER_TEXT}>Hudson River</Label>
        <Label x={256} y={1310} rotate={41} fill={RIVER_TEXT}>Hudson River</Label>
        <Label x={571} y={1786} rotate={64} fill={RIVER_TEXT}>Hudson</Label>
        <Label x={102} y={1215} anchor="end">op Hill</Label>
        <Label x={74} y={1248} anchor="end">79m</Label>
        <Label x={123} y={1381} anchor="end">wall-on-</Label>
        <Label x={95} y={1413} anchor="end">dson</Label>
        <Label x={296} y={1611} anchor="middle" length={125}>Storm King</Label>
        <Label x={296} y={1643} anchor="middle" length={107}>Mountain</Label>
        <Label x={296} y={1675} anchor="middle">411m</Label>
        <Label x={163} y={1701}>Bu</Label>
        <Label x={99} y={1784} anchor="end">er Hill</Label>
        <Label x={82} y={1816} anchor="end">70m</Label>
        <Label x={697} y={1781} length={129}>Cold Spring</Label>
        <Label x={792} y={1709} length={123}>Nelsonville</Label>
        <Label x={1148} y={1846} length={78}>Cat Hill</Label>
        <Label x={857} y={1643} size={30} rotate={-53} fill={BLUE} weight={600}>Nelsonville</Label>
        <Label x={1703} y={1682} length={129}>Dennytown</Label>
        <Label x={2065} y={1667} length={131}>Greg's Peak</Label>
        <Label x={1995} y={562} anchor="middle" length={72}>Round</Label>
        <Label x={1995} y={595} anchor="middle" length={107}>Mountain</Label>
        <Label x={1995} y={627} anchor="middle">380m</Label>
        <text fontSize="28" fontWeight="600" fill={RED} stroke="#e6e0e0" strokeOpacity=".7" strokeWidth="6" paintOrder="stroke" textLength="364">
          <textPath href="#at">Appalachian Trail - 09 NY-NJ</textPath>
        </text>
      </g>
    </svg>
  );
}

function MapButton({ className = "", children }: { className?: string; children: React.ReactNode }) {
  return (
    <button className={`flex h-[50px] w-[50px] items-center justify-center bg-[#0b3c78]/60 text-white/90 ${className}`}>{children}</button>
  );
}

/* ---------- page ---------- */

const NAV: [keyof typeof ICONS, string][] = [
  ["plus", "New"], ["cog", "Settings"], ["user", "Profile"], ["question", "Help"], ["signout", "Logout"],
];

function Page() {
  return (
    <div className="ml-[6px] h-[1850px] w-[2218px] rounded-tl-[20px] bg-white">
      <nav className="flex h-[112px] items-center justify-between rounded-tl-[20px] bg-[#2e363b] pr-[38px] pl-[31.6px]">
        <span className="pt-[1px] text-[38.5px] leading-[60px] tracking-[-0.8px] text-white [-webkit-text-stroke:0.4px_white]">Wanderlog</span>
        <div className="flex gap-[31.8px] pt-[2px] font-['Liberation_Serif',serif] text-[32px] leading-[40px] text-[#b4b8ba]">
          {NAV.map(([icon, label]) => (
            <a key={label} className="flex items-center gap-[8px]">
              <Icon name={icon} />
              {label}
            </a>
          ))}
        </div>
      </nav>
      <header className="flex h-[136px] items-start justify-between pt-[40px] pr-[20px] pl-[46px]">
        <h1 className="text-[46px] leading-[59px] font-bold whitespace-nowrap text-[#212529] [text-shadow:3px_3px_0.5px_#808080]">Beacon to Cold Spring</h1>
        <div className="flex gap-[5px] text-white">
          <button className="flex h-[76px] w-[80px] items-center justify-center rounded-[10px] bg-[#606a70]" />
          <button className="flex h-[76px] w-[82px] items-center justify-center rounded-[10px] bg-[#606a70]"><Icon name="share" /></button>
          <button className="flex h-[76px] w-[84px] items-center justify-center rounded-[10px] bg-[#219f48]"><Icon name="edit" /></button>
          <button className="flex h-[76px] w-[77px] items-center justify-center rounded-[10px] bg-[#d82638]"><Icon name="trash" /></button>
        </div>
      </header>
      <div className="flex h-[52px] items-center pt-[6px] pl-[32px] font-['Liberation_Serif',serif] text-[32px] leading-[40px] text-[#6c757d]">
        <Icon name="eye" className="text-[#5c6c72]" />
        <Icon name="user" className="ml-[16px] text-[#5c6c72]" />
        <span className="ml-[8px]">Tom</span>
        <Icon name="users" className="ml-[17px] text-[#5c6c72]" />
        <span className="ml-[8px]">3</span>
        <Icon name="calendar" className="ml-[17px] text-[#5c6c72]" />
        <span className="ml-[8px]">2015-12-31</span>
      </div>
      <div className="relative ml-[30px] h-[1538px] w-[2168px] rounded-[12px] border-4 border-black px-[3px] pt-[3px]">
        <TrailMap />
        <div className="absolute top-[21px] left-[21px] flex flex-col gap-[2px] rounded-[8px] bg-white/40 p-[4px]">
          <MapButton className="rounded-t-[4px]">
            <svg width="22" height="22" viewBox="0 0 22 22"><path d="M8.500 2h5v7.500H21v5h-7.500V22h-5v-7.500H1v-5h7.500z" fill="currentColor" /></svg>
          </MapButton>
          <MapButton className="rounded-b-[4px]">
            <svg width="22" height="22" viewBox="0 0 22 22"><path d="M1 11h20v5H1z" fill="currentColor" /></svg>
          </MapButton>
        </div>
        <div className="absolute top-[21px] right-[21px] rounded-[8px] bg-white/40 p-[4px]">
          <MapButton className="rounded-[4px]">
            <svg width="18" height="22" viewBox="0 -4 18 22"><path d="M8.500 .5H17.500V9.500L14.500 6.500L6.500 14.500L9.500 17.500H.5V8.500L3.500 11.500L11.500 3.500Z" fill="currentColor" /></svg>
          </MapButton>
        </div>
        <div className="absolute right-[21px] bottom-[22px] rounded-[8px] bg-white/40 p-[4px]">
          <MapButton className="rounded-[4px]">
            <span className="text-[38px] leading-[50px] font-semibold">i</span>
          </MapButton>
        </div>
      </div>
    </div>
  );
}

/* ---------- modal ---------- */

const H3 = "mb-[16px] pt-px text-[54.4px] leading-[66.2px] font-medium";

function Lines({ items }: { items: [string, string][] }) {
  return (
    <p>
      {items.map(([text, tracking]) => (
        <span key={text} className={`block ${tracking}`}>{text}</span>
      ))}
    </p>
  );
}

function SummaryModal() {
  return (
    <div className="mt-[58px] flex h-[1524px] w-[1600px] flex-col rounded-[18px] border-2 border-black/20 bg-white bg-clip-padding whitespace-nowrap text-[#212529]">
      <div className="flex h-[138px] items-center rounded-t-[16px] border-b-2 border-[#dee2e6] bg-[#4b4b4b] px-[32px]">
        <h5 className="pt-[2px] text-[46.6px] leading-[72px] font-medium tracking-[-2px] text-white">Activity Summary</h5>
      </div>
      <div className="flex h-[1240px] flex-col px-[32px] pt-[33px] text-[31px] leading-[48px]">
        <h2 className="mb-[16px] pt-px text-[62.1px] leading-[75.8px] font-medium tracking-[-1.7px]">New Year's Eve Hike in the Hudson Highlands</h2>
        <Lines items={[
          ["On December 31, 2015, I embarked on an epic 5-hour and 18-minute hike through the breathtaking", "tracking-[-0.105px]"],
          ["Hudson Highlands, covering a distance of 7.7 miles. My adventure began at 10:52 AM at the trailhead in", "tracking-[-0.18px]"],
          ["Fishkill, New York, and concluded at 4:11 PM in the scenic town of Cold Spring.", "tracking-[-0.2px]"],
        ]} />
        <h3 className={`${H3} tracking-[-1.38px]`}>Elevation Gain and Points of Interest</h3>
        <Lines items={[
          ["The hike was a challenging one, with a staggering elevation gain of 3,193 feet. The lowest point of my", "tracking-[-0.21px]"],
          ["journey was 34 feet above sea level, near the banks of the Hudson River in Cold Spring. In contrast, the", "tracking-[-0.23px]"],
          ["highest point was a remarkable 1,622 feet, offering panoramic views of the surrounding landscape from", "tracking-[-0.24px]"],
          ["the summit of Breakneck Ridge.", "tracking-[-0.15px]"],
        ]} />
        <h3 className={`${H3} tracking-[-1.5px]`}>Natural Beauty and Landmarks</h3>
        <Lines items={[
          ["Throughout my hike, I was surrounded by the stunning natural beauty of the Hudson Highlands. I", "tracking-[-0.21px]"],
          ["traversed through dense forests, crossed rushing streams, and climbed rugged mountain trails. The", "tracking-[-0.18px]"],
          ["scenic vistas from the top of Breakneck Ridge were truly breathtaking, with the Hudson River snaking its", "tracking-[-0.19px]"],
          ["way through the valley below. I also passed through the historic village of Nelsonville, with its charming", "tracking-[-0.24px]"],
          ["19th-century architecture and quaint town square.", "tracking-[-0.09px]"],
        ]} />
        <h3 className={`${H3} tracking-[-1.69px]`}>A New Year's Eve to Remember</h3>
        <Lines items={[
          ["This hike was the perfect way to cap off the year, with the stunning natural beauty of the Hudson", "tracking-[-0.22px]"],
          ["Highlands providing a fitting backdrop to the excitement of New Year's Eve. As I made my way back to", "tracking-[-0.24px]"],
          ["civilization, I felt invigorated and refreshed, ready to take on the challenges of the new year.", "tracking-[-0.22px]"],
        ]} />
        <hr className="my-[32px] border-t-2 border-[#dee0e2]" />
        <em className="tracking-[-0.18px]">(Text generated using LLM meta.llama3-70b-instruct-v1:0)</em>
      </div>
      <div className="flex h-[142px] items-center justify-end border-t-2 border-[#dee2e6] pr-[58px]">
        <button className="pt-[2px] text-[31px] leading-[48px] tracking-[-0.4px]">Close</button>
      </div>
    </div>
  );
}

export default function App() {
  return (
    <div className="relative h-[1852px] w-[2224px] overflow-hidden bg-[#f2f4f5] pt-[2px] font-['Inter',sans-serif]">
      <Page />
      <div className="absolute inset-0 pt-[2px] pl-[6px]">
        <div className="h-full w-full rounded-tl-[20px] bg-black/50" />
      </div>
      <div className="absolute inset-0 flex items-start pl-[320px]">
        <SummaryModal />
      </div>
    </div>
  );
}
